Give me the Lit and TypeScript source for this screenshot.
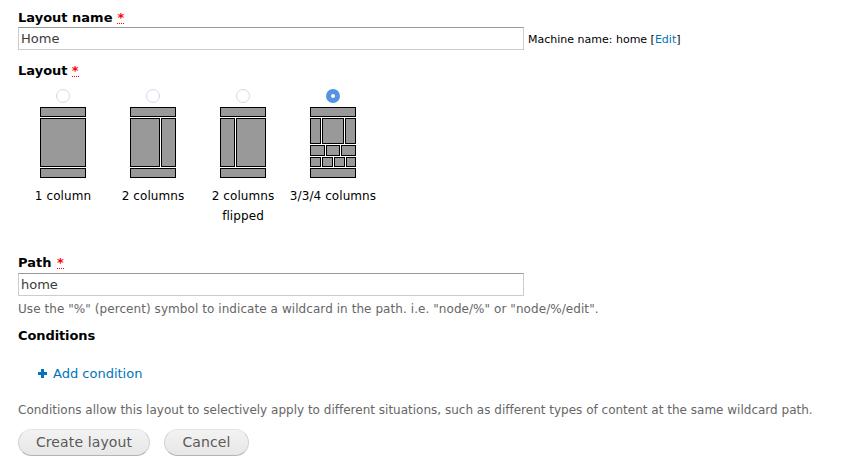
import { LitElement, html, css, svg } from "lit";
import { customElement, property } from "lit/decorators.js";

type Box = [x: number, y: number, w: number, h: number];

const HEADER: Box = [0, 0, 46, 10];
const FOOTER: Box = [0, 61, 46, 10];

const LAYOUTS: { name: string; boxes: Box[]; selected?: boolean }[] = [
  { name: "1 column", boxes: [[0, 11, 46, 49]] },
  { name: "2 columns", boxes: [[0, 11, 30, 49], [31, 11, 15, 49]] },
  { name: "2 columns flipped", boxes: [[0, 11, 15, 49], [16, 11, 30, 49]] },
  {
    name: "3/3/4 columns",
    selected: true,
    boxes: [
      [0, 11, 11, 26], [12, 11, 22, 26], [35, 11, 11, 26],
      [0, 38, 15, 11], [16, 38, 14, 11], [31, 38, 15, 11],
      [0, 50, 11, 10], [12, 50, 11, 10], [24, 50, 11, 10], [36, 50, 10, 10],
    ],
  },
];

@customElement("layout-option")
class LayoutOption extends LitElement {
  @property() name = "";
  @property({ attribute: false }) boxes: Box[] = [];
  @property({ type: Boolean }) selected = false;

  static styles = css`
    :host {
      display: flex;
      flex-direction: column;
      align-items: center;
      width: 90px;
    }
    .radio {
      width: 14px;
      height: 14px;
      margin-bottom: 4px;
    }
    .off { fill: #fff; stroke: #d3d8ea; }
    .on { fill: #5294e2; }
    .dot { fill: #fff; }
    .diagram { display: block; }
    .region { fill: #999; stroke: #000; }
    .name {
      margin-top: 8px;
      text-align: center;
      font-size: 12px;
      line-height: 20px;
      letter-spacing: 0.08px;
    }
  `;

  render() {
    return html`
      <svg class="radio" viewBox="0 0 14 14">
        ${this.selected
          ? svg`<circle class="on" cx="7" cy="7" r="7"/><circle class="dot" cx="7" cy="7" r="2"/>`
          : svg`<circle class="off" cx="7" cy="7" r="6.5"/>`}
      </svg>
      <svg class="diagram" width="46" height="71">
        ${[HEADER, ...this.boxes, FOOTER].map(
          ([x, y, w, h]) =>
            svg`<rect class="region" x=${x + 0.5} y=${y + 0.5} width=${w - 1} height=${h - 1}/>`
        )}
      </svg>
      <div class="name">${this.name}</div>
    `;
  }
}

@customElement("app-root")
class AppRoot extends LitElement {
  static styles = css`
    :host {
      display: block;
      box-sizing: border-box;
      height: 468px;
      padding: 8px 18px 0;
      background: #fff;
      color: #000;
      font: 13px/20px "DejaVu Sans", sans-serif;
      overflow: hidden;
    }
    .label {
      display: flex;
      gap: 5px;
      height: 19px;
      font-weight: bold;
      white-space: nowrap;
    }
    .req {
      box-sizing: border-box;
      width: 7px;
      height: 16px;
      color: #f00;
      border-bottom: 1px dotted #f00;
    }
    .row {
      display: flex;
      align-items: center;
      gap: 4px;
    }
    .input {
      box-sizing: border-box;
      display: block;
      width: 506px;
      height: 23px;
      margin: 0;
      padding: 2px;
      border: 1px solid #ccc;
      border-top-color: #999;
      border-radius: 0;
      outline: none;
      background: #fff;
      color: #3b3b3b;
      font: 13px "DejaVu Sans", sans-serif;
    }
    .machine {
      height: 20px;
      margin-bottom: -1px;
      padding-top: 1px;
      font-size: 11px;
      white-space: nowrap;
    }
    .link { color: #0074bd; text-decoration: none; }
    .layout-label { gap: 4.3px; margin-top: 11px; }
    .options {
      display: flex;
      height: 145px;
      margin-top: 9px;
    }
    .path-label { gap: 5.6px; height: 20px; margin-top: 19px; }
    .hint {
      color: #666;
      font-size: 12px;
      letter-spacing: 0.004px;
      white-space: nowrap;
    }
    .path-hint { margin-top: 3px; letter-spacing: 0.066px; }
    .conditions { margin-top: 7px; letter-spacing: -0.1px; }
    .add {
      display: flex;
      gap: 6px;
      margin: 19px 0 16px 20px;
    }
    .plus { margin-top: 5px; fill: #0074bd; }
    .actions {
      display: flex;
      gap: 14px;
      margin-top: 9px;
    }
    .button {
      box-sizing: border-box;
      height: 27px;
      padding: 0 0 1px;
      border: 1px solid #e4e4e4;
      border-bottom-color: #b4b4b4;
      border-left-color: #d2d2d2;
      border-right-color: #d2d2d2;
      border-radius: 14px;
      background: linear-gradient(#f3f3f3, #e7e7e7);
      color: #5a5a5a;
      font: 14px "DejaVu Sans", sans-serif;
      letter-spacing: 0.12px;
      white-space: nowrap;
    }
    .create { width: 132px; }
    .cancel { width: 85px; }
  `;

  render() {
    const required = html`<span class="req">*</span>`;
    return html`
      <div class="label"><span>Layout name</span>${required}</div>
      <div class="row">
        <input class="input" .value=${"Home"} />
        <span class="machine">Machine name: home [<a class="link">Edit</a>]</span>
      </div>
      <div class="label layout-label"><span>Layout</span>${required}</div>
      <div class="options">
        ${LAYOUTS.map(
          (l) => html`<layout-option .name=${l.name} .boxes=${l.boxes} .selected=${!!l.selected}></layout-option>`
        )}
      </div>
      <div class="label path-label"><span>Path</span>${required}</div>
      <input class="input" .value=${"home"} />
      <div class="hint path-hint">Use the "%" (percent) symbol to indicate a wildcard in the path. i.e. "node/%" or "node/%/edit".</div>
      <div class="label conditions">Conditions</div>
      <div class="add">
        <svg class="plus" width="9" height="9"><path d="M3 0h3v3h3v3H6v3H3V6H0V3h3z"/></svg>
        <a class="link">Add condition</a>
      </div>
      <div class="hint">Conditions allow this layout to selectively apply to different situations, such as different types of content at the same wildcard path.</div>
      <div class="actions">
        <button class="button create">Create layout</button>
        <button class="button cancel">Cancel</button>
      </div>
    `;
  }
}
